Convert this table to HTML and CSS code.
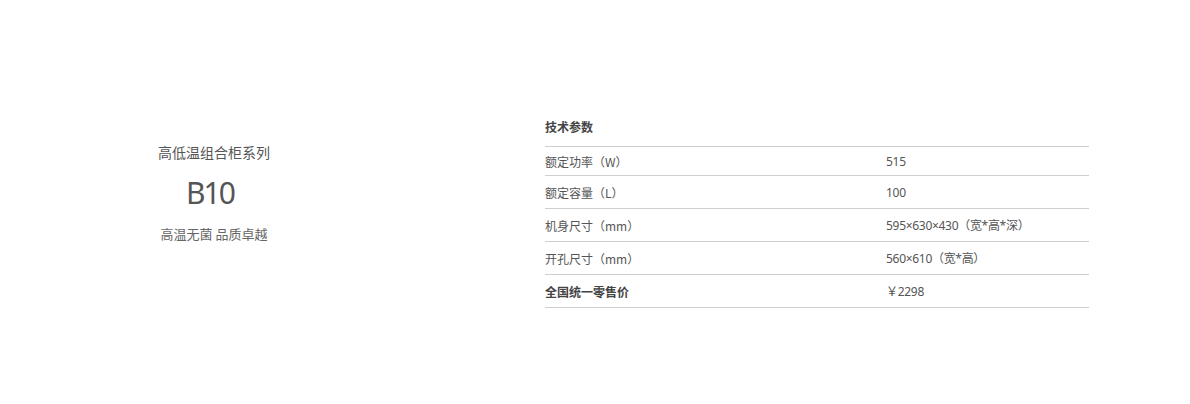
FILE: index.html
```html
<!DOCTYPE html>
<html lang="zh-CN">
<head>
<meta charset="utf-8">
<link rel="stylesheet" href="styles.css">
</head>
<body>
<div class="page">
  <div class="intro">
    <div class="series">高低温组合柜系列</div>
    <div class="model">B10</div>
    <div class="slogan">高温无菌 品质卓越</div>
  </div>
  <div class="specs">
    <div class="specs-title">技术参数</div>
    <div class="row first"><span class="label">额定功率（W）</span><span class="value">515</span></div>
    <div class="row"><span class="label">额定容量（L）</span><span class="value">100</span></div>
    <div class="row"><span class="label">机身尺寸（mm）</span><span class="value">595×630×430（宽*高*深）</span></div>
    <div class="row"><span class="label">开孔尺寸（mm）</span><span class="value">560×610（宽*高）</span></div>
    <div class="row price"><span class="label">全国统一零售价</span><span class="value">￥2298</span></div>
  </div>
</div>
</body>
</html>
```

FILE: styles.css
```css
html, body {
  margin: 0;
  padding: 0;
  background: #fff;
}
body {
  font-family: "Noto Sans CJK SC", "Noto Sans", sans-serif;
  color: #555;
  width: 1190px;
  height: 404px;
  overflow: hidden;
}
.page {
  display: flex;
  align-items: flex-start;
  padding: 117px 101px 0 158px;
}
.intro {
  width: 112px;
  margin-top: 25px;
  display: flex;
  flex-direction: column;
  align-items: center;
}
.series {
  font-size: 14px;
  line-height: 20px;
  color: #555;
  white-space: nowrap;
}
.model {
  margin-top: 11px;
  padding-right: 8px;
  font-family: "Noto Sans", "Open Sans", sans-serif;
  font-size: 30px;
  line-height: 40px;
  letter-spacing: -2px;
  color: #555;
}
.slogan {
  margin-top: 11px;
  font-size: 13px;
  line-height: 20px;
  color: #666;
  white-space: nowrap;
}
.specs {
  margin-left: 275px;
  width: 544px;
  font-size: 12px;
}
.specs-title {
  font-weight: bold;
  color: #444;
  line-height: 20px;
  padding-bottom: 9px;
  border-bottom: 1px solid #cfcfcf;
  font-size: 12px;
}
.row {
  display: grid;
  grid-template-columns: 341px 1fr;
  align-items: center;
  height: 32px;
  border-bottom: 1px solid #cfcfcf;
  color: #555;
}
.row.first {
  height: 28px;
}
.value {
  font-family: "Noto Sans", "Noto Sans CJK SC", sans-serif;
  letter-spacing: -0.3px;
}
.row.price .label {
  font-weight: bold;
  color: #444;
}
```
